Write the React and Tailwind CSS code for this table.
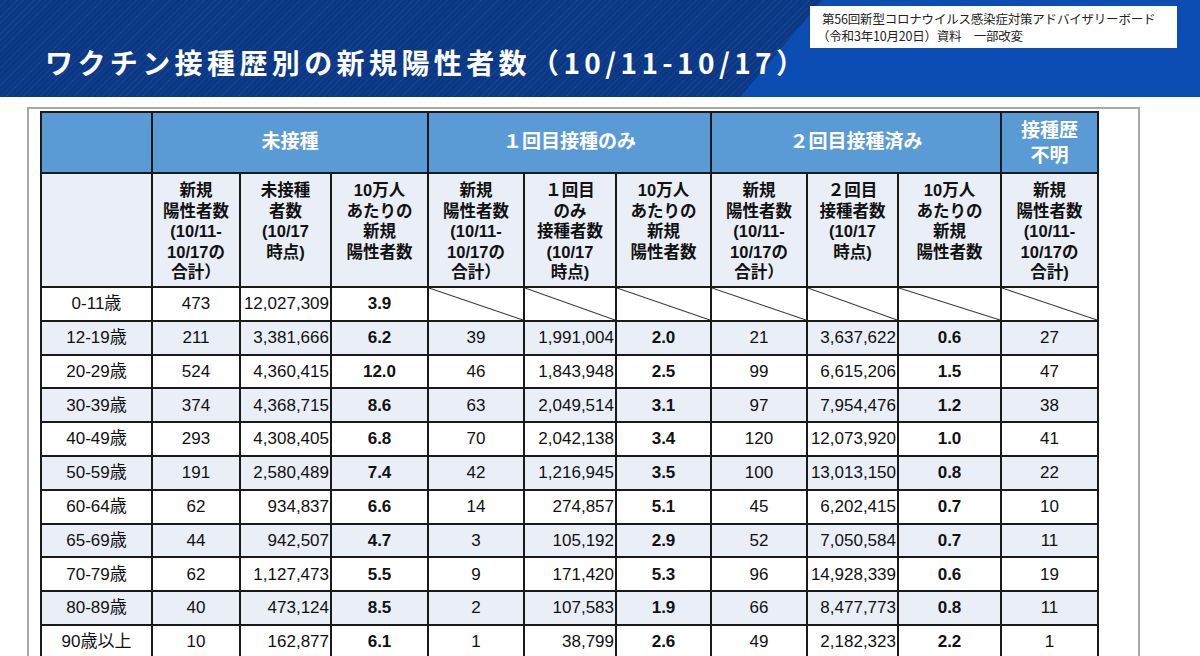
import React from "react";

const WIDTHS = [111, 88, 91, 97, 96, 92, 95, 96, 91, 103, 97];

const RANGE = ["新規", "陽性者数", "(10/11-", "10/17の", "合計）"];
const RATE = ["10万人", "あたりの", "新規", "陽性者数"];

const SUB_HEADS = [
  [],
  RANGE,
  ["未接種", "者数", "(10/17", "時点)"],
  RATE,
  RANGE,
  ["１回目", "のみ", "接種者数", "(10/17", "時点)"],
  RATE,
  RANGE,
  ["２回目", "接種者数", "(10/17", "時点)"],
  RATE,
  ["新規", "陽性者数", "(10/11-", "10/17の", "合計)"],
];

const ROWS = [
  ["0-11歳", "473", "12,027,309", "3.9"],
  ["12-19歳", "211", "3,381,666", "6.2", "39", "1,991,004", "2.0", "21", "3,637,622", "0.6", "27"],
  ["20-29歳", "524", "4,360,415", "12.0", "46", "1,843,948", "2.5", "99", "6,615,206", "1.5", "47"],
  ["30-39歳", "374", "4,368,715", "8.6", "63", "2,049,514", "3.1", "97", "7,954,476", "1.2", "38"],
  ["40-49歳", "293", "4,308,405", "6.8", "70", "2,042,138", "3.4", "120", "12,073,920", "1.0", "41"],
  ["50-59歳", "191", "2,580,489", "7.4", "42", "1,216,945", "3.5", "100", "13,013,150", "0.8", "22"],
  ["60-64歳", "62", "934,837", "6.6", "14", "274,857", "5.1", "45", "6,202,415", "0.7", "10"],
  ["65-69歳", "44", "942,507", "4.7", "3", "105,192", "2.9", "52", "7,050,584", "0.7", "11"],
  ["70-79歳", "62", "1,127,473", "5.5", "9", "171,420", "5.3", "96", "14,928,339", "0.6", "19"],
  ["80-89歳", "40", "473,124", "8.5", "2", "107,583", "1.9", "66", "8,477,773", "0.8", "11"],
  ["90歳以上", "10", "162,877", "6.1", "1", "38,799", "2.6", "49", "2,182,323", "2.2", "1"],
];

const RIGHT = [2, 5, 8];
const BOLD = [3, 6, 9];

const cell = "border-2 border-[#1a1a1a] p-0";

function Banner() {
  return (
    <div className="relative h-[97px] overflow-hidden bg-[#0a3886]">
      <div className="absolute inset-0 bg-[repeating-linear-gradient(135deg,rgba(255,255,255,0.05)_0px,rgba(255,255,255,0.05)_1px,transparent_1px,transparent_4px)]" />
      <div className="absolute inset-0 bg-[#0b4db2] [clip-path:polygon(822px_0,100%_0,100%_100%,740px_100%)]" />
      <div className="absolute left-[810px] top-[6px] h-[42px] w-[367px] bg-white px-[12px] pt-[4px] text-[12.5px] leading-[17px] text-[#222] font-['Noto_Sans_CJK_JP',sans-serif] tracking-[-0.2px]">
        <div>第56回新型コロナウイルス感染症対策アドバイザリーボード</div>
        <div className="-ml-[5px]">（令和3年10月20日）資料　一部改変</div>
      </div>
      <h1 className="relative pl-[45px] pt-[40px] text-[28px] font-bold leading-[44px] tracking-[4.4px] text-white font-['Noto_Sans_CJK_JP',sans-serif]">
        ワクチン接種歴別の新規陽性者数（10/11-10/17）
      </h1>
    </div>
  );
}

function SlashCell() {
  return (
    <td className={`${cell} bg-white bg-[linear-gradient(to_top_right,transparent_calc(50%_-_1px),#333_50%,transparent_calc(50%_+_1px))]`} />
  );
}

function DataTable() {
  return (
    <table className="table-fixed border-collapse text-[#111] font-['Liberation_Sans','Noto_Sans_CJK_JP',sans-serif]">
      <colgroup>
        {WIDTHS.map((w, i) => (
          <col key={i} style={{ width: w }} />
        ))}
      </colgroup>
      <thead>
        <tr className="h-[61px] bg-[#5b9bd5] text-[19px] font-bold text-white">
          <th className={cell} />
          <th colSpan={3} className={cell}>未接種</th>
          <th colSpan={3} className={cell}>１回目接種のみ</th>
          <th colSpan={3} className={cell}>２回目接種済み</th>
          <th className={`${cell} leading-[25px]`}>
            接種歴
            <br />
            不明
          </th>
        </tr>
        <tr className="h-[114px] bg-[#e9eef7] text-[16.5px] font-bold leading-[20.5px]">
          {SUB_HEADS.map((lines, i) => (
            <th key={i} className={`${cell} pt-[6px] align-top`}>
              {lines.map((l, j) => (
                <div key={j} className="whitespace-nowrap">{l}</div>
              ))}
            </th>
          ))}
        </tr>
      </thead>
      <tbody className="text-[17px]">
        {ROWS.map((r, ri) => (
          <tr key={ri} className={`h-[33.8px] ${ri % 2 ? "bg-[#e9eef7]" : "bg-white"}`}>
            {WIDTHS.map((_, ci) => {
              if (ci >= r.length) return <SlashCell key={ci} />;
              const align = RIGHT.includes(ci) ? "text-right pr-[1px]" : "text-center";
              const weight = BOLD.includes(ci) ? "font-bold" : "";
              return (
                <td key={ci} className={`${cell} ${align} ${weight} whitespace-nowrap`}>
                  {r[ci]}
                </td>
              );
            })}
          </tr>
        ))}
      </tbody>
    </table>
  );
}

export default function App() {
  return (
    <div className="h-[656px] w-[1200px] overflow-hidden bg-white">
      <Banner />
      <div className="mt-[10px] ml-[27px] w-[1113px] border-l-2 border-r-2 border-t-2 border-[#a8a8a8] pl-[11px] pt-[2px]">
        <DataTable />
      </div>
    </div>
  );
}
